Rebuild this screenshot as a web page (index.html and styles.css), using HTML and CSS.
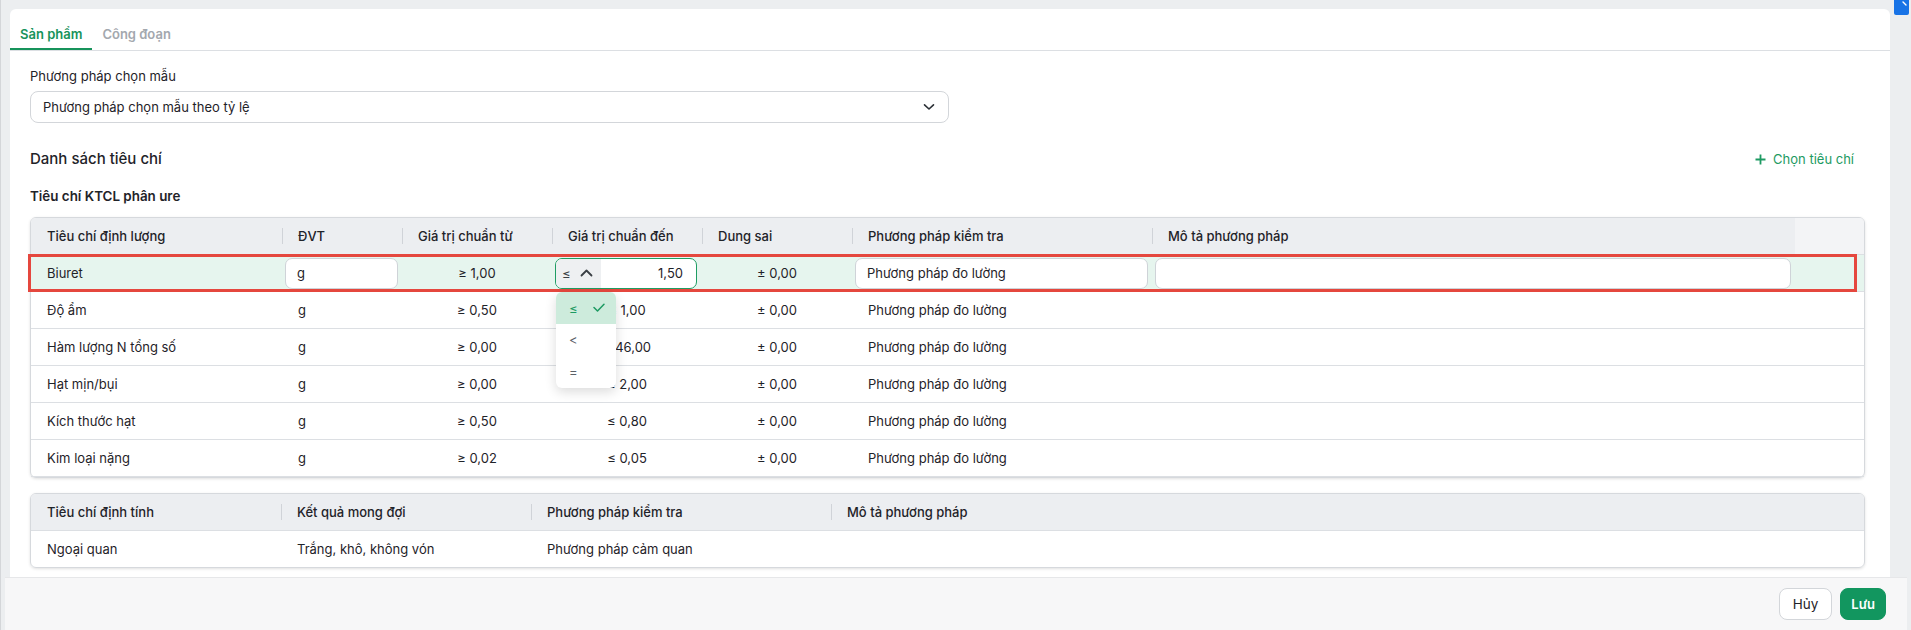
FILE: index.html
```html
<!DOCTYPE html>
<html lang="vi">

<head>
    <meta charset="UTF-8">
    <meta name="viewport" content="width=device-width, initial-scale=1.0">
    <title>Tiêu chí kiểm tra chất lượng</title>
    <link rel="stylesheet" href="styles.css">
</head>

<body>
    <div class="app_wrap">
        <span class="corner_badge">
            <svg width="15" height="15" viewBox="0 0 15 15"><path d="M9 2 L12 5" stroke="#fff" stroke-width="1.4" stroke-linecap="round"/></svg>
        </span>

        <div class="main_panel">
            <div class="tab_bar">
                <a class="tab on">Sản phẩm</a>
                <a class="tab">Công đoạn</a>
            </div>

            <div class="panel_body">
                <div class="field">
                    <label>Phương pháp chọn mẫu</label>
                    <div class="select_box">
                        <span>Phương pháp chọn mẫu theo tỷ lệ</span>
                        <svg width="12" height="8" viewBox="0 0 12 8"><path d="M1.5 1.8 L6 6 L10.5 1.8" fill="none" stroke="#2b3036" stroke-width="1.6" stroke-linecap="round" stroke-linejoin="round"/></svg>
                    </div>
                </div>

                <div class="section_head">
                    <strong>Danh sách tiêu chí</strong>
                    <a class="add_link">
                        <svg width="11" height="11" viewBox="0 0 11 11"><path d="M5.5 0.5 V10.5 M0.5 5.5 H10.5" stroke="#1d9a62" stroke-width="1.8"/></svg>
                        Chọn tiêu chí
                    </a>
                </div>

                <p class="group_title">Tiêu chí KTCL phân ure</p>

                <!-- tiêu chí định lượng -->
                <div class="grid_table quant">
                    <div class="grid_row head">
                        <div class="cell">Tiêu chí định lượng</div>
                        <div class="cell">ĐVT</div>
                        <div class="cell">Giá trị chuẩn từ</div>
                        <div class="cell">Giá trị chuẩn đến</div>
                        <div class="cell">Dung sai</div>
                        <div class="cell">Phương pháp kiểm tra</div>
                        <div class="cell">Mô tả phương pháp</div>
                        <div class="cell action"></div>
                    </div>

                    <div class="grid_row active">
                        <div class="cell">Biuret</div>
                        <div class="cell edit"><div class="text_input">g</div></div>
                        <div class="cell center">≥ 1,00</div>
                        <div class="cell edit to_value">
                            <div class="text_input focus">
                                <span class="op_pick">≤
                                    <svg width="13" height="8" viewBox="0 0 13 8"><path d="M1.5 6.5 L6.5 1.5 L11.5 6.5" fill="none" stroke="#3a3f45" stroke-width="1.8" stroke-linecap="round" stroke-linejoin="round"/></svg>
                                </span>
                                <span class="num">1,50</span>
                                <ul class="op_menu">
                                    <li class="on">≤
                                        <svg width="12" height="9" viewBox="0 0 12 9"><path d="M1 4.5 L4.5 8 L11 1.2" fill="none" stroke="#1d9a62" stroke-width="1.5" stroke-linecap="round" stroke-linejoin="round"/></svg>
                                    </li>
                                    <li>&lt;</li>
                                    <li>=</li>
                                </ul>
                            </div>
                        </div>
                        <div class="cell center">± 0,00</div>
                        <div class="cell edit"><div class="text_input">Phương pháp đo lường</div></div>
                        <div class="cell edit"><div class="text_input"></div></div>
                        <div class="cell action"></div>
                    </div>

                    <div class="grid_row">
                        <div class="cell">Độ ẩm</div>
                        <div class="cell">g</div>
                        <div class="cell center">≥ 0,50</div>
                        <div class="cell center">≤ 1,00</div>
                        <div class="cell center">± 0,00</div>
                        <div class="cell">Phương pháp đo lường</div>
                        <div class="cell"></div>
                        <div class="cell action"></div>
                    </div>

                    <div class="grid_row">
                        <div class="cell">Hàm lượng N tổng số</div>
                        <div class="cell">g</div>
                        <div class="cell center">≥ 0,00</div>
                        <div class="cell center">≤ 46,00</div>
                        <div class="cell center">± 0,00</div>
                        <div class="cell">Phương pháp đo lường</div>
                        <div class="cell"></div>
                        <div class="cell action"></div>
                    </div>

                    <div class="grid_row">
                        <div class="cell">Hạt mịn/bụi</div>
                        <div class="cell">g</div>
                        <div class="cell center">≥ 0,00</div>
                        <div class="cell center">≤ 2,00</div>
                        <div class="cell center">± 0,00</div>
                        <div class="cell">Phương pháp đo lường</div>
                        <div class="cell"></div>
                        <div class="cell action"></div>
                    </div>

                    <div class="grid_row">
                        <div class="cell">Kích thước hạt</div>
                        <div class="cell">g</div>
                        <div class="cell center">≥ 0,50</div>
                        <div class="cell center">≤ 0,80</div>
                        <div class="cell center">± 0,00</div>
                        <div class="cell">Phương pháp đo lường</div>
                        <div class="cell"></div>
                        <div class="cell action"></div>
                    </div>

                    <div class="grid_row">
                        <div class="cell">Kim loại nặng</div>
                        <div class="cell">g</div>
                        <div class="cell center">≥ 0,02</div>
                        <div class="cell center">≤ 0,05</div>
                        <div class="cell center">± 0,00</div>
                        <div class="cell">Phương pháp đo lường</div>
                        <div class="cell"></div>
                        <div class="cell action"></div>
                    </div>

                    <div class="row_mark"></div>
                </div>

                <!-- tiêu chí định tính -->
                <div class="grid_table qual">
                    <div class="grid_row head">
                        <div class="cell">Tiêu chí định tính</div>
                        <div class="cell">Kết quả mong đợi</div>
                        <div class="cell">Phương pháp kiểm tra</div>
                        <div class="cell">Mô tả phương pháp</div>
                    </div>
                    <div class="grid_row">
                        <div class="cell">Ngoại quan</div>
                        <div class="cell">Trắng, khô, không vón</div>
                        <div class="cell">Phương pháp cảm quan</div>
                        <div class="cell"></div>
                    </div>
                </div>
            </div>
        </div>

        <div class="footer">
            <a class="btn">Hủy</a>
            <a class="btn on">Lưu</a>
        </div>
    </div>
</body>

</html>
```

FILE: styles.css
```css
* {
    margin: 0;
    padding: 0;
    box-sizing: border-box;
}

body {
    font-family: Inter, "Noto Sans", sans-serif;
    font-size: 13px;
    color: #1f2329;
    background: #eceef0;
    overflow: hidden;
}

a {
    text-decoration: none;
    color: inherit;
    cursor: pointer;
}

ul {
    list-style: none;
}

.app_wrap {
    position: relative;
    display: flex;
    flex-direction: column;
    height: 630px;
    padding: 9px 0 0 4px;
    border-left: 1px solid #d4d6d9;
}

.corner_badge {
    position: absolute;
    top: 0;
    right: 2px;
    width: 15px;
    height: 15px;
    background: #1873e6;
    border-radius: 0 0 2px 2px;
}

.corner_badge svg {
    display: block;
}

.main_panel {
    flex: 1;
    margin: 0 21px 0 5px;
    background: #fff;
    border-radius: 6px 6px 0 0;
}

/* tabs */
.tab_bar {
    display: flex;
    border-bottom: 1px solid #dcdfe3;
}

.tab {
    padding: 16px 10px 5px;
    line-height: 18px;
    font-weight: 600;
    color: #a3a8ae;
    border-bottom: 2px solid transparent;
}

.tab.on {
    color: #17935b;
    border-bottom-color: #17935b;
}

.panel_body {
    padding: 16px 25px 0 20px;
}

.field label {
    display: block;
    line-height: 18px;
}

.select_box {
    display: flex;
    align-items: center;
    justify-content: space-between;
    width: 919px;
    height: 32px;
    margin-top: 6px;
    padding: 0 13px 0 12px;
    border: 1px solid #d3d6da;
    border-radius: 8px;
}

.section_head {
    display: flex;
    align-items: center;
    justify-content: space-between;
    margin-top: 26px;
    margin-right: 11px;
    line-height: 20px;
}

.section_head strong {
    font-size: 15px;
    font-weight: 500;
}

.add_link {
    display: flex;
    align-items: center;
    gap: 7px;
    color: #1d9a62;
}

.group_title {
    margin-top: 18px;
    line-height: 18px;
    font-size: 13.4px;
    font-weight: 600;
}

/* tables */
.grid_table {
    position: relative;
    margin-top: 12px;
    border: 1px solid #d6d9dd;
    border-radius: 6px;
    box-shadow: 0 1px 3px rgba(0, 0, 0, 0.12);
}

.grid_table.qual {
    margin-top: 15px;
}

.grid_row {
    display: grid;
    height: 37px;
    border-bottom: 1px solid #dcdfe3;
}

.grid_row:last-of-type {
    border-bottom: none;
    height: 36px;
}

.quant .grid_row {
    grid-template-columns: 251px 120px 150px 150px 150px 300px 1fr 69px;
}

.qual .grid_row {
    grid-template-columns: 250px 250px 300px 1fr;
}

.cell {
    position: relative;
    display: flex;
    align-items: center;
    padding: 0 16px;
    white-space: nowrap;
}

.cell.center {
    justify-content: center;
    padding: 0;
}

.head {
    background: #eceef1;
    border-radius: 5px 5px 0 0;
    font-weight: 500;
}

.head .cell + .cell::before {
    content: "";
    position: absolute;
    left: 0;
    top: 10px;
    width: 1px;
    height: 16px;
    background: #d0d3d8;
}

.head .cell.action {
    background: #f3f4f6;
    border-radius: 0 5px 0 0;
}

.head .cell.action::before {
    display: none;
}

.grid_row.active {
    background: #e6f5ee;
}

.cell.edit {
    padding: 0 4px 0 3px;
}

.cell.to_value {
    padding: 0 5px 0 3px;
}

.text_input {
    position: relative;
    display: flex;
    align-items: center;
    width: 100%;
    height: 31px;
    padding: 0 11px;
    background: #fff;
    border: 1px solid #cfd3d8;
    border-radius: 7px;
}

.text_input.focus {
    padding: 0;
    border-color: #1f9d63;
}

.op_pick {
    display: flex;
    align-items: center;
    gap: 9px;
    width: 45px;
    height: 100%;
    padding-left: 6px;
    background: #eef0f2;
    border-radius: 6px 0 0 6px;
    color: #3a3f45;
}

.num {
    flex: 1;
    text-align: right;
    padding-right: 13px;
}

.op_menu {
    position: absolute;
    top: calc(100% + 4px);
    left: 0;
    z-index: 2;
    width: 60px;
    background: #fff;
    border-radius: 6px;
    box-shadow: 0 4px 12px rgba(0, 0, 0, 0.14);
    overflow: hidden;
}

.op_menu li {
    display: flex;
    align-items: center;
    justify-content: space-between;
    height: 32px;
    padding: 0 11px 0 13px;
    color: #5b6168;
}

.op_menu li.on {
    background: #cdebdc;
    color: #1d9a62;
}

.row_mark {
    position: absolute;
    left: -3px;
    top: 36px;
    width: 1829px;
    height: 38px;
    border: 3px solid #e5473e;
    pointer-events: none;
}

/* footer */
.footer {
    display: flex;
    justify-content: flex-end;
    align-items: center;
    gap: 8px;
    height: 53px;
    margin-right: 4px;
    padding-right: 21px;
    background: #f7f7f8;
    border-top: 1px solid #e6e7e9;
}

.btn {
    display: inline-flex;
    align-items: center;
    height: 32px;
    padding: 0 13px;
    border: 1px solid #d3d6da;
    border-radius: 8px;
    background: #fff;
    font-size: 13.5px;
    font-weight: 400;
}

.btn.on {
    padding: 0 10px;
    background: #12965f;
    border-color: #12965f;
    color: #fff;
    font-size: 13px;
    font-weight: 600;
}
```
